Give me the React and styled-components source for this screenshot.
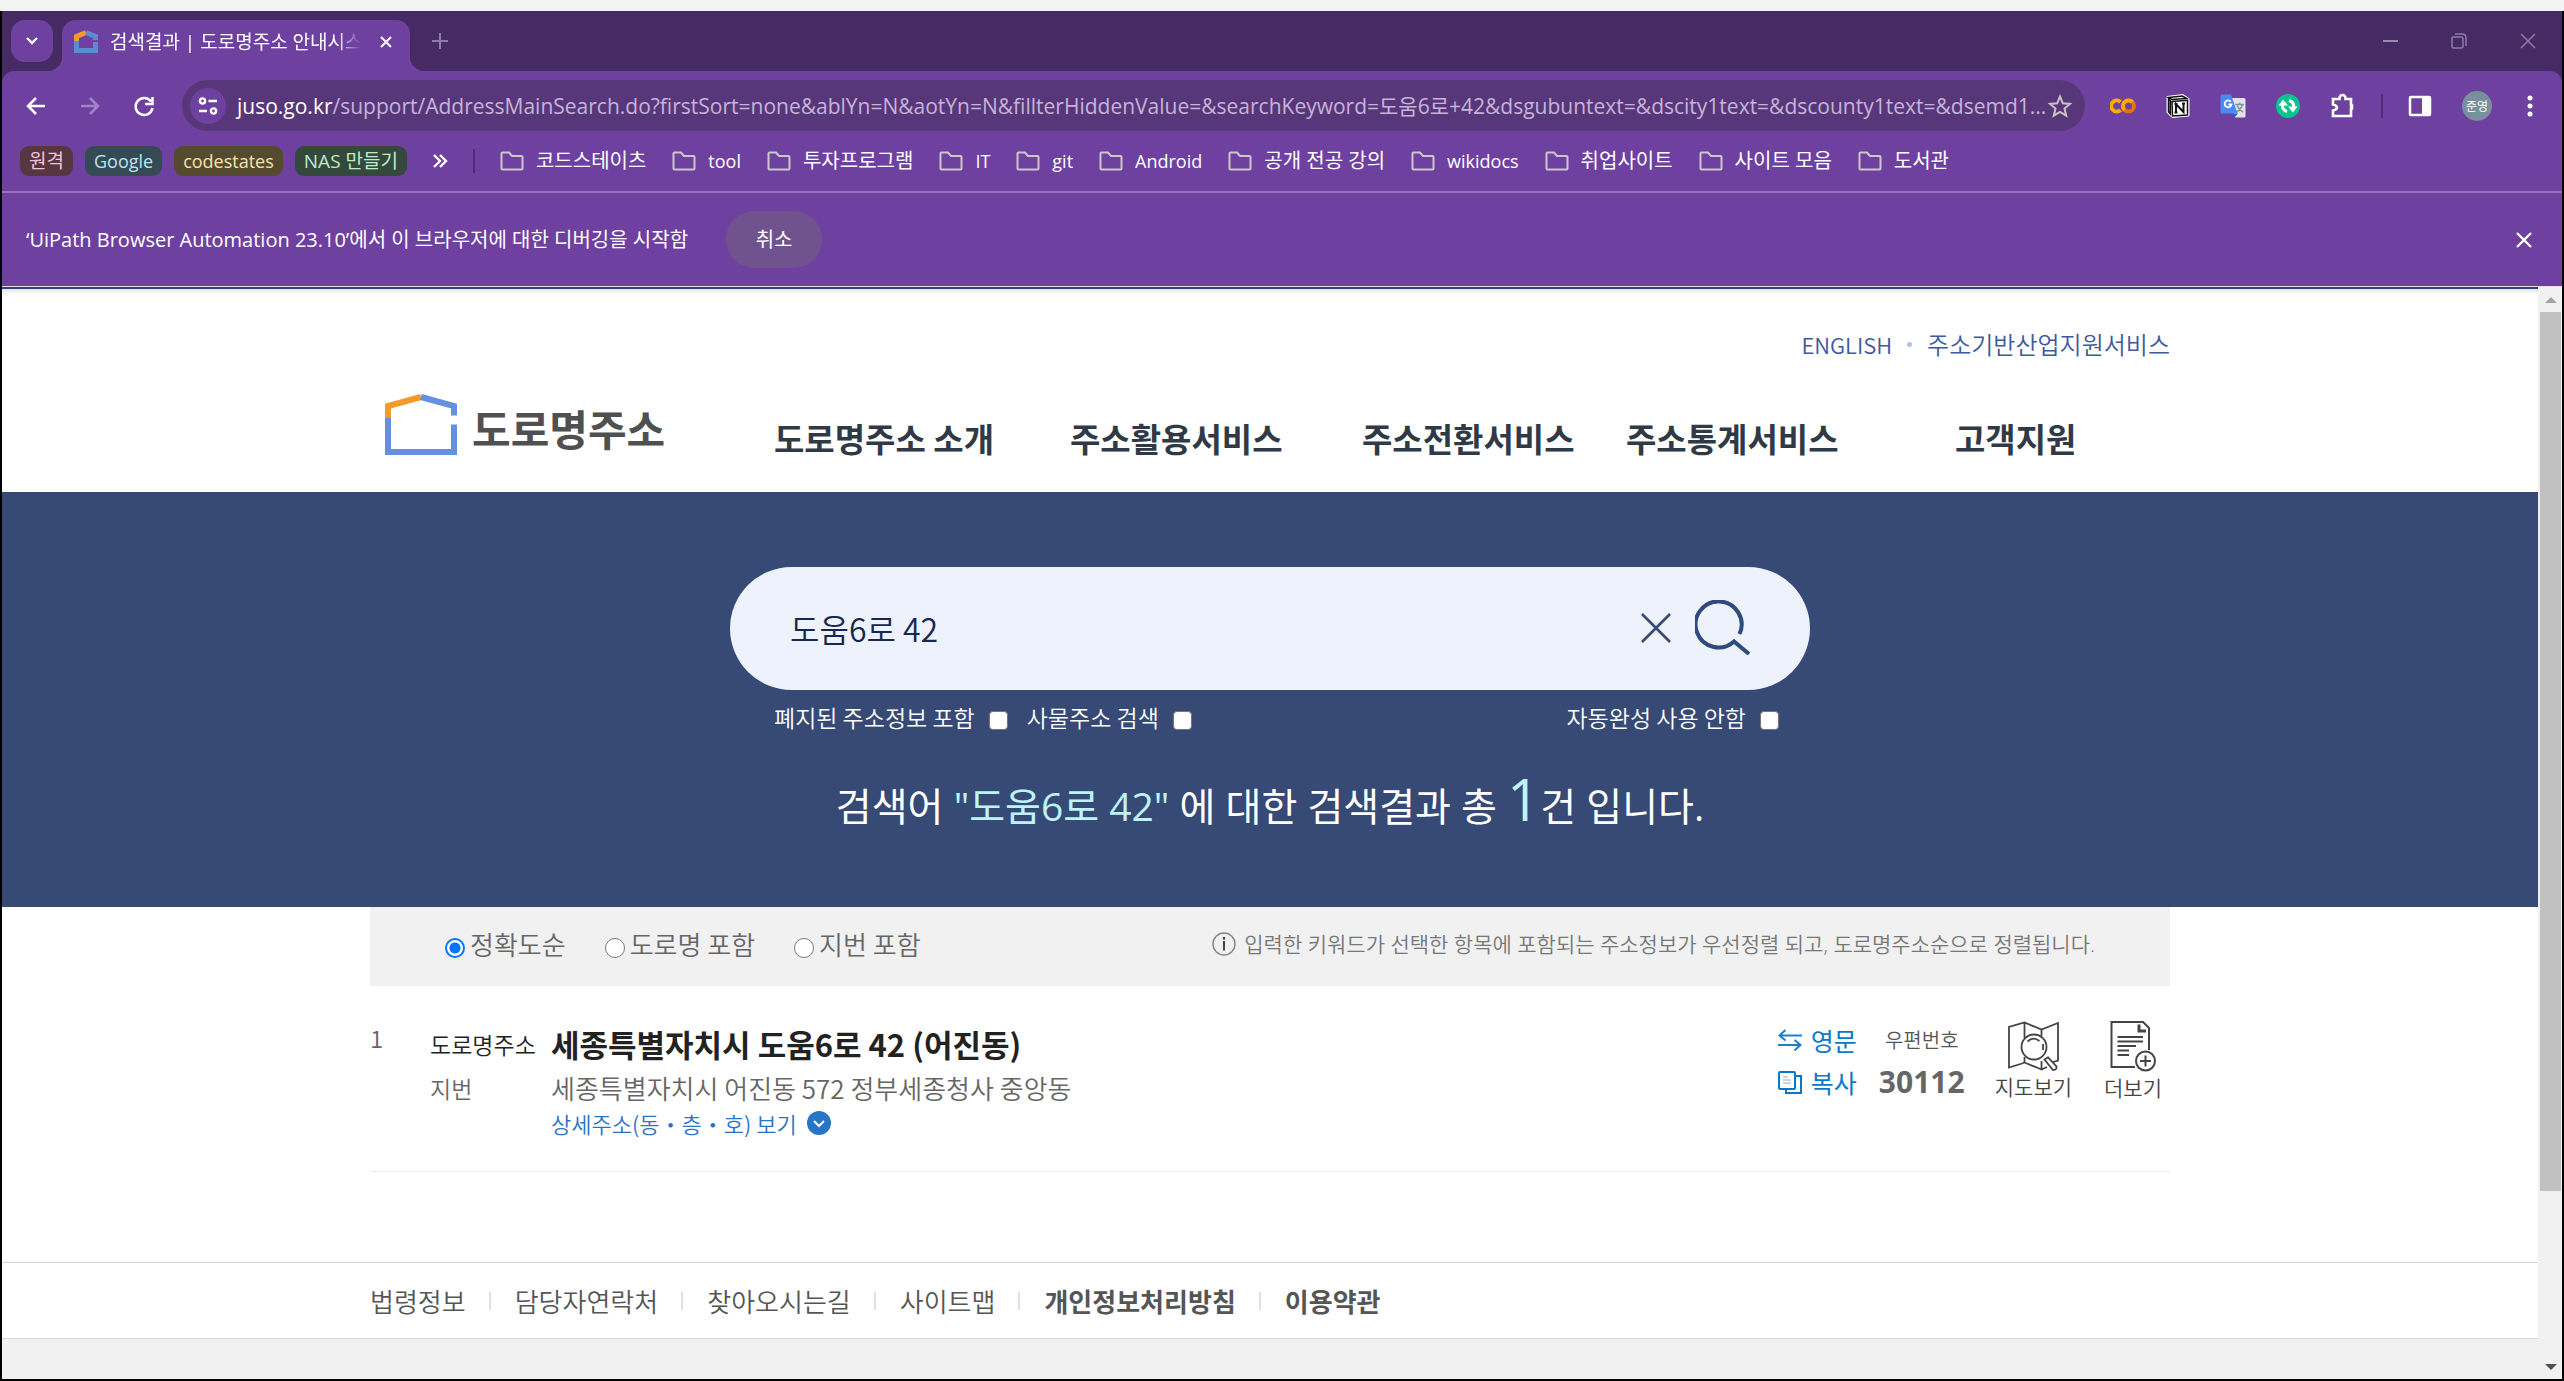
import React from "react";
import styled, { createGlobalStyle } from "styled-components";

const UI = `"Open Sans", "Noto Sans CJK KR", sans-serif`;
const KR = `"Noto Sans CJK KR", "Noto Sans", sans-serif`;

const Global = createGlobalStyle`
  *, *::before, *::after { box-sizing: border-box; }
  body { margin: 0; font-family: ${KR}; background: #f3f3f3; }
  button { border: 0; padding: 0; margin: 0; background: none; font: inherit; color: inherit; cursor: pointer; }
  a { color: inherit; text-decoration: none; }
  svg { display: block; flex: none; }
  h1, h2, p, ul, dl, dd, dt { margin: 0; padding: 0; }
  ul { list-style: none; }
`;

const Shell = styled.div`
  min-height: 100vh;
  display: flex;
  flex-direction: column;
  padding-top: 11px;
`;
const Window = styled.div`
  flex: 1;
  display: flex;
  flex-direction: column;
  border: 2px solid #000;
  border-top: 0;
  background: #fff;
`;

/* ---------- browser chrome ---------- */
const TabStrip = styled.div`
  display: flex;
  align-items: flex-start;
  height: 60px;
  padding: 9px 25px 0 9px;
  background: #462a63;
`;
const TabSearch = styled.button`
  width: 42px;
  height: 42px;
  border-radius: 14px;
  background: #6e41a0;
  display: grid;
  place-items: center;
`;
const Tab = styled.div`
  position: relative;
  display: flex;
  align-items: center;
  width: 348px;
  height: 51px;
  margin-left: 9px;
  padding: 0 18px 8px 12px;
  border-radius: 14px 14px 0 0;
  background: #6e41a0;
  &::before, &::after {
    content: "";
    position: absolute;
    bottom: 0;
    width: 14px;
    height: 14px;
  }
  &::before { left: -14px; background: radial-gradient(circle at 0 0, transparent 14px, #6e41a0 14px); }
  &::after { right: -14px; background: radial-gradient(circle at 100% 0, transparent 14px, #6e41a0 14px); }
`;
const TabTitle = styled.span`
  flex: 1;
  margin-left: 12px;
  white-space: nowrap;
  font: 19px/28px ${UI};
  color: #fff;
  mask-image: linear-gradient(90deg, #000 225px, transparent 251px);
`;
const NewTab = styled.button`
  margin: 12px 0 0 21px;
`;
const WindowButtons = styled.div`
  margin: 12px 0 0 auto;
  display: flex;
  gap: 51px;
`;
const ToolbarBack = styled.div`
  background: #462a63;
`;
const Chrome = styled.div`
  background: #6e41a0;
  color: #fff;
  border-radius: 12px 12px 0 0;
`;
const Toolbar = styled.div`
  display: flex;
  align-items: center;
  height: 69px;
  padding: 0 24px 0 22px;
`;
const NavButtons = styled.div`
  display: flex;
  gap: 30px;
  margin-right: 26px;
`;
const AddressBar = styled.div`
  flex: 1;
  min-width: 0;
  display: flex;
  align-items: center;
  height: 51px;
  padding: 0 12px 0 8px;
  border-radius: 26px;
  background: #573779;
`;
const SiteInfo = styled.button`
  width: 36px;
  height: 36px;
  border-radius: 50%;
  background: #6e41a0;
  display: grid;
  place-items: center;
`;
const Url = styled.div`
  flex: 1;
  min-width: 0;
  margin-left: 11px;
  white-space: nowrap;
  font: 21px/30px ${UI};
  color: #c5b3d9;
  b { font-weight: 400; color: #fff; }
`;
const Extensions = styled.div`
  display: flex;
  align-items: center;
  gap: 30px;
  margin-left: 25px;
`;
const Rule = styled.span`
  width: 2px;
  height: 24px;
  margin: 0 ${(p) => (p.$tight ? -5 : 0)}px;
  background: #4d2d72;
`;
const Avatar = styled.button`
  width: 30px;
  height: 30px;
  border-radius: 50%;
  background: #78909c;
  font: 12px/30px ${KR};
  color: #fff;
`;
const Bookmarks = styled.nav`
  display: flex;
  align-items: center;
  height: 53px;
  padding: 0 18px 9px;
  border-bottom: 2px solid #9474bb;
  font: 20px/30px ${UI};
`;
const Chips = styled.div`
  display: flex;
  gap: 12px;
`;
const Chip = styled.button`
  height: 30px;
  padding: 0 9px;
  border-radius: 9px;
  background: ${(p) => p.$bg};
  color: ${(p) => p.$fg};
  font-size: ${(p) => (p.$latin ? 18 : 19)}px;
  line-height: 28px;
`;
const More = styled.button`
  margin: 0 25px;
`;
const Folders = styled.ul`
  display: flex;
  gap: 26px;
  margin-left: 25px;
`;
const Folder = styled.a`
  display: flex;
  align-items: center;
  gap: 12px;
  white-space: nowrap;
  font-size: ${(p) => (p.$latin ? 18 : 20)}px;
`;
const InfoBar = styled.div`
  display: flex;
  align-items: center;
  gap: 38px;
  height: 94px;
  padding: 0 30px 0 24px;
  border-bottom: 1px solid #e6dff0;
  font: 20px/28px ${UI};
`;
const Cancel = styled.button`
  width: 96px;
  height: 57px;
  border-radius: 28px;
  background: #70528f;
`;
const Dismiss = styled.button`
  margin-left: auto;
`;

/* ---------- page ---------- */
const Viewport = styled.div`
  flex: 1;
  display: flex;
`;
const Page = styled.div`
  flex: 1;
  min-width: 0;
  display: flex;
  flex-direction: column;
  border-top: 2px solid #2b4576;
  font-weight: 350;
`;
const Container = styled.div`
  width: 100%;
  max-width: 1800px;
  margin: 0 auto;
`;
const Header = styled.header`
  padding: 40px 0 30px;
  background: linear-gradient(#dfe3e6, #fff 5px);
`;
const Utility = styled.div`
  display: flex;
  align-items: center;
  justify-content: flex-end;
  gap: 15px;
  font-size: 24px;
  line-height: 30px;
  color: #3d5a9e;
`;
const English = styled.a`
  font-size: 22px;
`;
const Dot = styled.span`
  width: 5px;
  height: 5px;
  border-radius: 2px;
  background: #b3c3e8;
`;
const Brand = styled.div`
  display: flex;
  align-items: flex-start;
  margin-top: 35px;
  padding-left: 15px;
`;
const Logo = styled.a`
  flex: none;
  display: flex;
  align-items: flex-start;
  gap: 15px;
  width: 389px;
  font-size: 42px;
  line-height: 68px;
  font-weight: 700;
  color: #505050;
`;
const MainNav = styled.nav`
  flex: 1;
  display: grid;
  grid-template-columns: 296fr 292fr 264fr 329fr 215fr;
  padding-top: 22px;
  font-size: 33px;
  line-height: 45px;
  font-weight: 700;
  color: #2f3a46;
`;
const Hero = styled.section`
  padding: 75px 0 71px;
  background: #364a75;
  color: #fff;
`;
const SearchArea = styled.form`
  width: 100%;
  max-width: 1080px;
  margin: 0 auto;
`;
const SearchBox = styled.div`
  display: flex;
  align-items: center;
  height: 123px;
  padding: 0 60px 2px;
  border-radius: 62px;
  background: #edf2fd;
  input {
    flex: 1;
    min-width: 0;
    border: 0;
    padding: 0;
    outline: 0;
    background: none;
    font: inherit;
    font-size: 32px;
    line-height: 48px;
    color: #16284f;
  }
`;
const SearchButton = styled.button`
  margin-left: 24px;
`;
const Options = styled.div`
  display: flex;
  gap: 19px;
  margin-top: 12px;
  padding: 0 31px 0 44px;
`;
const Check = styled.label`
  display: flex;
  align-items: center;
  gap: 14px;
  font-size: 23px;
  line-height: 30px;
  &:last-child { margin-left: auto; }
  input {
    appearance: none;
    width: 19px;
    height: 19px;
    margin: 6px 0 0;
    border: 1px solid #767676;
    border-radius: 4px;
    background: #fff;
  }
`;
const Summary = styled.h1`
  margin-top: 44px;
  text-align: center;
  white-space: nowrap;
  font-family: ${UI};
  font-weight: 400;
  font-size: 39px;
  line-height: 60px;
  span { color: #bdf3fb; }
  big { font-size: 58px; line-height: 1px; color: #bdf3fb; }
`;
const FilterBar = styled.div`
  display: flex;
  align-items: center;
  justify-content: space-between;
  height: 79px;
  padding: 0 75px 5px;
  background: #f1f1f1;
`;
const Radios = styled.div`
  display: flex;
  gap: 39px;
`;
const Radio = styled.label`
  display: flex;
  align-items: center;
  gap: 5px;
  font-size: 26px;
  line-height: 34px;
  color: #666;
  input {
    appearance: none;
    width: 20px;
    height: 20px;
    margin: 8px 0 0;
    border: 1px solid #767676;
    border-radius: 50%;
    background: #fff;
  }
  input:checked {
    border: 2px solid #0075ff;
    background: radial-gradient(circle, #0075ff 5px, #fff 6px);
  }
`;
const Hint = styled.p`
  display: flex;
  align-items: center;
  gap: 8px;
  white-space: nowrap;
  font-family: ${UI};
  font-size: 21px;
  line-height: 30px;
  color: #777;
`;
const Result = styled.article`
  display: flex;
  align-items: flex-start;
  padding: 33px 0 35px;
  border-bottom: 1px solid #ececec;
`;
const Index = styled.span`
  width: 60px;
  font-size: 24px;
  line-height: 38px;
  color: #666;
`;
const Address = styled.dl`
  flex: 1;
  display: grid;
  grid-template-columns: 121px 1fr;
  align-items: center;
  margin-top: 3px;
`;
const Term = styled.dt`
  font-size: 23px;
  line-height: 44px;
  color: ${(p) => (p.$strong ? "#222" : "#666")};
`;
const Road = styled.dd`
  font-size: 31px;
  line-height: 44px;
  font-weight: 700;
  color: #222;
`;
const Lot = styled.dd`
  font-size: 26px;
  line-height: 44px;
  color: #666;
`;
const Detail = styled.dd`
  grid-column: 2;
  button {
    display: flex;
    align-items: center;
    gap: 10px;
    font-size: 22px;
    line-height: 26px;
    color: #2874c7;
  }
`;
const Actions = styled.div`
  display: flex;
  align-items: flex-start;
  padding-right: 8px;
`;
const Links = styled.div`
  display: flex;
  flex-direction: column;
`;
const LinkButton = styled.button`
  display: flex;
  align-items: center;
  gap: 9px;
  font-size: 25px;
  line-height: 42px;
  font-weight: 400;
  color: #0a78c8;
`;
const Zip = styled.div`
  width: 88px;
  margin: 0 29px 0 21px;
  text-align: center;
  color: #555;
  span { display: block; font-size: 20px; line-height: 42px; }
  strong { display: block; font: 700 30px/42px "Open Sans", sans-serif; color: #666; }
`;
const Tile = styled.button`
  display: flex;
  flex-direction: column;
  align-items: center;
  padding-top: 2px;
  & + & { margin-left: 32px; }
  font-size: 21px;
  line-height: 30px;
  color: #444;
`;
const FooterNav = styled.nav`
  margin-top: 90px;
  border: 1px solid #d8d8d8;
  border-width: 1px 0;
`;
const FooterLinks = styled.ul`
  display: flex;
  align-items: center;
  height: 75px;
  font-size: 26px;
  line-height: 40px;
  color: #555;
  li { display: flex; align-items: center; }
  li + li::before {
    content: "";
    width: 2px;
    height: 18px;
    margin: 0 24px 0 23px;
    background: #e0e0e0;
  }
`;
const FooterLink = styled.a`
  font-weight: ${(p) => (p.$bold ? 700 : 350)};
`;
const FooterRest = styled.footer`
  flex: 1;
  min-height: 40px;
  background: #f1f1f1;
`;
const Scrollbar = styled.div`
  width: 24px;
  display: flex;
  flex-direction: column;
  align-items: center;
  justify-content: space-between;
  padding: 10px 1px 9px 2px;
  background: #f1f1f1;
`;
const Track = styled.div`
  flex: 1;
  align-self: stretch;
  margin: 9px 0 5px;
`;
const Thumb = styled.div`
  height: 84%;
  background: #c1c1c1;
`;

/* ---------- icons ---------- */
const Line = ({ w, h, d, s = 2, c = "#fff", box, ...rest }) => (
  <svg width={w} height={h} viewBox={box || `0 0 ${w} ${h}`} fill="none" stroke={c} strokeWidth={s} {...rest}>
    <path d={d} />
  </svg>
);
const FolderIcon = () => (
  <Line w={24} h={20} d="M2.500 1.500H9l3 3.500h9.500q1 0 1 1v11.500q0 1-1 1h-19q-1 0-1-1v-15q0-1 1-1Z" c="#cdc8c8" s={2} />
);
const Favicon = () => (
  <svg width="24" height="23" viewBox="0 0 24 23" fill="none" strokeWidth="5">
    <path d="M2.500 11V6.500L12 2.500" stroke="#f29a2a" />
    <path d="M12 2.500L21.500 6.500V10M21.500 12v8.500h-19V11" stroke="#5b8bd0" />
  </svg>
);
const HouseLogo = () => (
  <svg width="72" height="61" viewBox="0 0 72 61" fill="none" strokeWidth="6">
    <path d="M3 24V12L36 3" stroke="#f29a2a" />
    <path d="M36 3L69 12V21.500M69 30.500V58H3V24" stroke="#658fe0" />
  </svg>
);
const Colab = () => (
  <svg width="26" height="16" viewBox="0 0 26 16" fill="none" strokeWidth="4">
    <path d="M10.500 4A5.500 5.500 0 1 0 10.500 12" stroke="#f9ab00" />
    <circle cx="18.500" cy="8" r="5.500" stroke="#e8710a" />
    <path d="M14.600 11.900A5.500 5.500 0 0 1 22.400 4.100" stroke="#f9ab00" />
  </svg>
);
const Notion = () => (
  <svg width="24" height="24" viewBox="0 0 24 24">
    <path d="M1 2.500L17 .5l6 4v17.500l-17 1.500L1 18.500Z" fill="#fff" stroke="#fff" strokeLinejoin="round" />
    <path d="M2.500 3.500L16.500 2l4 2.500L6 5.500Z M6 7.500L21.500 6.300V21L6.500 22Z M2.500 5L4.300 6.700V20L2.500 17.800Z" fill="#fff" stroke="#111" strokeWidth="1.500" />
    <path d="M10 18.500V10.300L17.500 18V9.500M8.500 10h3M16 9.500h3M8.500 18.500h3" fill="none" stroke="#111" strokeWidth="2" />
  </svg>
);
const Translate = () => (
  <svg width="26" height="24" viewBox="0 0 26 24">
    <path d="M11 4h13q1.500 0 1.500 1.500V22q0 1.500-1.500 1.500H15Z" fill="#e2e4e8" />
    <path d="M15.500 10.500h8.500M19.700 8.500v2M22.500 10.500q-1.500 5-6 7.500M17 11.500q2 4.500 6 6.500" fill="none" stroke="#7f93a0" strokeWidth="1.500" />
    <path d="M12 19.500h6l-3.500 4Z" fill="#2a5fd0" />
    <path d="M2 .5h9L17.500 19.500H2Q.5 19.500 .5 18V2Q.5.5 2 .5Z" fill="#4a8af4" />
    <path d="M10.800 7.700A3.400 3.400 0 1 0 11.500 10.300H8.300" fill="none" stroke="#fff" strokeWidth="1.800" />
  </svg>
);
const Refresh = () => (
  <svg width="24" height="24" viewBox="0 0 24 24">
    <circle cx="12" cy="12" r="12" fill="#0bc48b" />
    <path d="M11 17.500Q5.500 16 6.500 10M13 6.500Q18.500 8 17.500 14" fill="none" stroke="#fff" strokeWidth="3" />
    <path d="M2.500 11.500L7 5.500l5 6ZM21.500 12.500L17 18.500l-5-6Z" fill="#fff" />
  </svg>
);
const MapIcon = () => (
  <svg width="52" height="50" viewBox="0 0 52 50" fill="none" stroke="#444" strokeWidth="1.800">
    <path d="M15 42.500L2 46.500V6L17.500 1.500L34.500 8.500L51 2V39.500L46 41M17.500 1.500V17M34.500 8.500V15M17.500 36V41.500L34.500 48.500V40M15 42.500L17.500 41.500M34.500 48.500L40 46" />
    <circle cx="27" cy="26" r="12.500" />
    <path d="M20.500 20.500Q26 15 32.500 20M36 23v6" />
    <path d="M37.500 38.500L41 36.500L49.500 45.500Q50 49 46 49Z" />
  </svg>
);
const DocIcon = () => (
  <svg width="46" height="51" viewBox="0 0 46 51" fill="none" stroke="#444" strokeWidth="2">
    <path d="M25 46H1.500V1H33L39 7V29" />
    <path d="M29 3.500V10h7" strokeWidth="3" />
    <path d="M7.500 16H33M7.500 20.500H33M7.500 25H26M7.500 29.500H19M7.500 34H19" />
    <circle cx="35.500" cy="40" r="9.500" />
    <path d="M35.500 34.500v11M30 40h11" />
  </svg>
);

const chips = [
  ["원격", "#563641", "#f6c3d6"],
  ["Google", "#354a52", "#b8e6f3", true],
  ["codestates", "#544a30", "#f7e5a4", true],
  ["NAS 만들기", "#35483c", "#b9efc6"],
];
const folders = [
  ["코드스테이츠"], ["tool", true], ["투자프로그램"], ["IT", true], ["git", true], ["Android", true],
  ["공개 전공 강의"], ["wikidocs", true], ["취업사이트"], ["사이트 모음"], ["도서관"],
];
const menu = ["도로명주소 소개", "주소활용서비스", "주소전환서비스", "주소통계서비스", "고객지원"];
const footer = [
  ["법령정보"], ["담당자연락처"], ["찾아오시는길"], ["사이트맵"], ["개인정보처리방침", true], ["이용약관", true],
];

function BrowserChrome() {
  return (
    <>
      <TabStrip>
        <TabSearch aria-label="탭 검색"><Line w={12} h={8} d="M1 1l5 5 5-5" s={2.4} /></TabSearch>
        <Tab>
          <Favicon />
          <TabTitle>검색결과 | 도로명주소 안내시스</TabTitle>
          <button aria-label="탭 닫기"><Line w={12} h={12} d="M1 1l10 10M11 1L1 11" /></button>
        </Tab>
        <NewTab aria-label="새 탭"><Line w={18} h={18} d="M9 1v16M1 9h16" c="#8f7ba6" /></NewTab>
        <WindowButtons>
          <button aria-label="최소화"><Line w={18} h={18} d="M2 9h15" c="#9a8aad" /></button>
          <button aria-label="이전 크기로"><Line w={18} h={18} d="M3 5h8q2 0 2 2v7q0 2-2 2H4q-2 0-2-2V6q0-1 1-1ZM5 2h7q4 0 4 4v8" c="#8f7ba6" s={1.5} /></button>
          <button aria-label="닫기"><Line w={18} h={18} d="M2 2l14 14M16 2L2 16" c="#8f7ba6" s={1.5} /></button>
        </WindowButtons>
      </TabStrip>
      <ToolbarBack>
        <Chrome>
          <Toolbar>
            <NavButtons>
              <button aria-label="뒤로"><Line w={24} h={24} d="M21 12H4M12 4l-8 8 8 8" s={2.5} /></button>
              <button aria-label="앞으로"><Line w={24} h={24} d="M3 12h17M12 4l8 8-8 8" s={2.5} c="#a184c4" /></button>
              <button aria-label="새로고침"><Line w={24} h={24} d="M19 7.500A8.500 8.500 0 1 0 20.500 14M20.500 3v7H13" s={2.5} /></button>
            </NavButtons>
            <AddressBar>
              <SiteInfo aria-label="사이트 정보">
                <svg width="20" height="18" viewBox="0 0 20 18" fill="none" stroke="#fff" strokeWidth="2.400">
                  <circle cx="4.500" cy="4" r="2.600" /><path d="M10.500 4H19M1 14h8" /><circle cx="15.500" cy="14" r="2.600" />
                </svg>
              </SiteInfo>
              <Url>
                <b>juso.go.kr</b>/support/AddressMainSearch.do?firstSort=none&amp;ablYn=N&amp;aotYn=N&amp;fillterHiddenValue=&amp;searchKeyword=도움6로+42&amp;dsgubuntext=&amp;dscity1text=&amp;dscounty1text=&amp;dsemd1...
              </Url>
              <button aria-label="북마크"><Line w={26} h={24} d="M13 2.500l2.800 6.800 7.200.6-5.500 4.700 1.700 7.100-6.200-3.800-6.200 3.800 1.700-7.100L3 9.900l7.200-.6Z" c="#c9c4c4" /></button>
            </AddressBar>
            <Extensions>
              <button aria-label="Colab"><Colab /></button>
              <button aria-label="Notion"><Notion /></button>
              <button aria-label="번역"><Translate /></button>
              <button aria-label="동기화"><Refresh /></button>
              <button aria-label="확장 프로그램"><Line w={26} h={26} d="M3 6h6.500V5a3 3 0 0 1 6 0v1H21v6.500h1a3 3 0 0 1 0 0v3h-1V23H3v-5.500q4-1 4-3t-4-3Z" s={2.6} /></button>
              <Rule $tight />
              <button aria-label="사이드 패널">
                <svg width="24" height="24" viewBox="0 0 24 24"><rect x="2" y="3" width="20" height="18" fill="none" stroke="#fff" strokeWidth="2.500" rx="1" /><path d="M14 3h8v18h-8Z" fill="#fff" /></svg>
              </button>
              <Avatar>준영</Avatar>
              <button aria-label="메뉴">
                <svg width="16" height="24" viewBox="0 0 16 24" fill="#fff"><circle cx="8" cy="4" r="2.500" /><circle cx="8" cy="12" r="2.500" /><circle cx="8" cy="20" r="2.500" /></svg>
              </button>
            </Extensions>
          </Toolbar>
          <Bookmarks>
            <Chips>
              {chips.map(([t, bg, fg, latin]) => <Chip key={t} $bg={bg} $fg={fg} $latin={latin}>{t}</Chip>)}
            </Chips>
            <More aria-label="더보기"><Line w={16} h={14} d="M2 1l6 6-6 6M8 1l6 6-6 6" s={2.4} /></More>
            <Rule />
            <Folders>
              {folders.map(([t, latin]) => <li key={t}><Folder href="#" $latin={latin}><FolderIcon />{t}</Folder></li>)}
            </Folders>
          </Bookmarks>
          <InfoBar>
            <span>‘UiPath Browser Automation 23.10’에서 이 브라우저에 대한 디버깅을 시작함</span>
            <Cancel>취소</Cancel>
            <Dismiss aria-label="닫기"><Line w={16} h={16} d="M1 1l14 14M15 1L1 15" s={2.4} /></Dismiss>
          </InfoBar>
        </Chrome>
      </ToolbarBack>
    </>
  );
}

function SiteHeader() {
  return (
    <Header>
      <Container>
        <Utility>
          <English href="#">ENGLISH</English>
          <Dot />
          <a href="#">주소기반산업지원서비스</a>
        </Utility>
        <Brand>
          <Logo href="#"><HouseLogo />도로명주소</Logo>
          <MainNav>{menu.map((m) => <a href="#" key={m}>{m}</a>)}</MainNav>
        </Brand>
      </Container>
    </Header>
  );
}

function SearchHero() {
  return (
    <Hero>
      <SearchArea onSubmit={(e) => e.preventDefault()}>
        <SearchBox>
          <input aria-label="주소 검색" defaultValue="도움6로 42" />
          <button type="reset" aria-label="지우기"><Line w={30} h={30} d="M1 1l28 28M29 1L1 29" c="#364a75" s={2.6} /></button>
          <SearchButton aria-label="검색">
            <svg width="55" height="55" viewBox="0 0 55 55" fill="none" stroke="#2f4a7f" strokeWidth="4">
              <path d="M44.500 34A23 23 0 1 0 39 41.500L54 54" />
            </svg>
          </SearchButton>
        </SearchBox>
        <Options>
          <Check>폐지된 주소정보 포함<input type="checkbox" /></Check>
          <Check>사물주소 검색<input type="checkbox" /></Check>
          <Check>자동완성 사용 안함<input type="checkbox" /></Check>
        </Options>
      </SearchArea>
      <Summary>검색어 <span>"도움6로 42"</span> 에 대한 검색결과 총 <big>1</big>건 입니다.</Summary>
    </Hero>
  );
}

function Results() {
  return (
    <Container as="main">
      <FilterBar>
        <Radios>
          <Radio><input type="radio" name="sort" defaultChecked />정확도순</Radio>
          <Radio><input type="radio" name="sort" />도로명 포함</Radio>
          <Radio><input type="radio" name="sort" />지번 포함</Radio>
        </Radios>
        <Hint>
          <svg width="24" height="24" viewBox="0 0 24 24" fill="none" stroke="#888" strokeWidth="1.500"><circle cx="12" cy="12" r="11" /><path d="M12 9v9.500M12 5v2.500" stroke="#444" strokeWidth="2" /></svg>
          입력한 키워드가 선택한 항목에 포함되는 주소정보가 우선정렬 되고, 도로명주소순으로 정렬됩니다.
        </Hint>
      </FilterBar>
      <Result>
        <Index>1</Index>
        <Address>
          <Term $strong>도로명주소</Term>
          <Road>세종특별자치시 도움6로 42 (어진동)</Road>
          <Term>지번</Term>
          <Lot>세종특별자치시 어진동 572 정부세종청사 중앙동</Lot>
          <Detail>
            <button>
              상세주소(동・층・호) 보기
              <svg width="24" height="24" viewBox="0 0 24 24"><circle cx="12" cy="12" r="12" fill="#2874c7" /><path d="M7 10l5 5 5-5" fill="none" stroke="#fff" strokeWidth="2" /></svg>
            </button>
          </Detail>
        </Address>
        <Actions>
          <Links>
            <LinkButton><Line w={24} h={22} d="M24 6.500H1.500M7.500 1L1.500 6.500l6 5M0 16h22.500M16.500 11l6 5-6 5.500" c="#1c80cc" />영문</LinkButton>
            <LinkButton>
              <svg width="24" height="23" viewBox="0 0 24 23" fill="none" stroke="#0a78c8" strokeWidth="2"><rect x="1" y="1" width="16" height="17" rx="1" /><path d="M17 5h6v17H8v-4" /><path d="M5 6h5M5 9h8M5 12h8" stroke="#9aa8b4" strokeWidth="1" /></svg>
              복사
            </LinkButton>
          </Links>
          <Zip><span>우편번호</span><strong>30112</strong></Zip>
          <Tile><MapIcon />지도보기</Tile>
          <Tile><DocIcon />더보기</Tile>
        </Actions>
      </Result>
    </Container>
  );
}

export default function App() {
  return (
    <Shell>
      <Global />
      <Window>
        <BrowserChrome />
        <Viewport>
          <Page>
            <SiteHeader />
            <SearchHero />
            <Results />
            <FooterNav>
              <Container>
                <FooterLinks>
                  {footer.map(([t, bold]) => <li key={t}><FooterLink href="#" $bold={bold}>{t}</FooterLink></li>)}
                </FooterLinks>
              </Container>
            </FooterNav>
            <FooterRest />
          </Page>
          <Scrollbar>
            <svg width="12" height="6" viewBox="0 0 12 6"><path d="M6 0l6 6H0Z" fill="#a3a3a3" /></svg>
            <Track><Thumb /></Track>
            <svg width="12" height="6" viewBox="0 0 12 6"><path d="M0 0h12L6 6Z" fill="#505050" /></svg>
          </Scrollbar>
        </Viewport>
      </Window>
    </Shell>
  );
}
